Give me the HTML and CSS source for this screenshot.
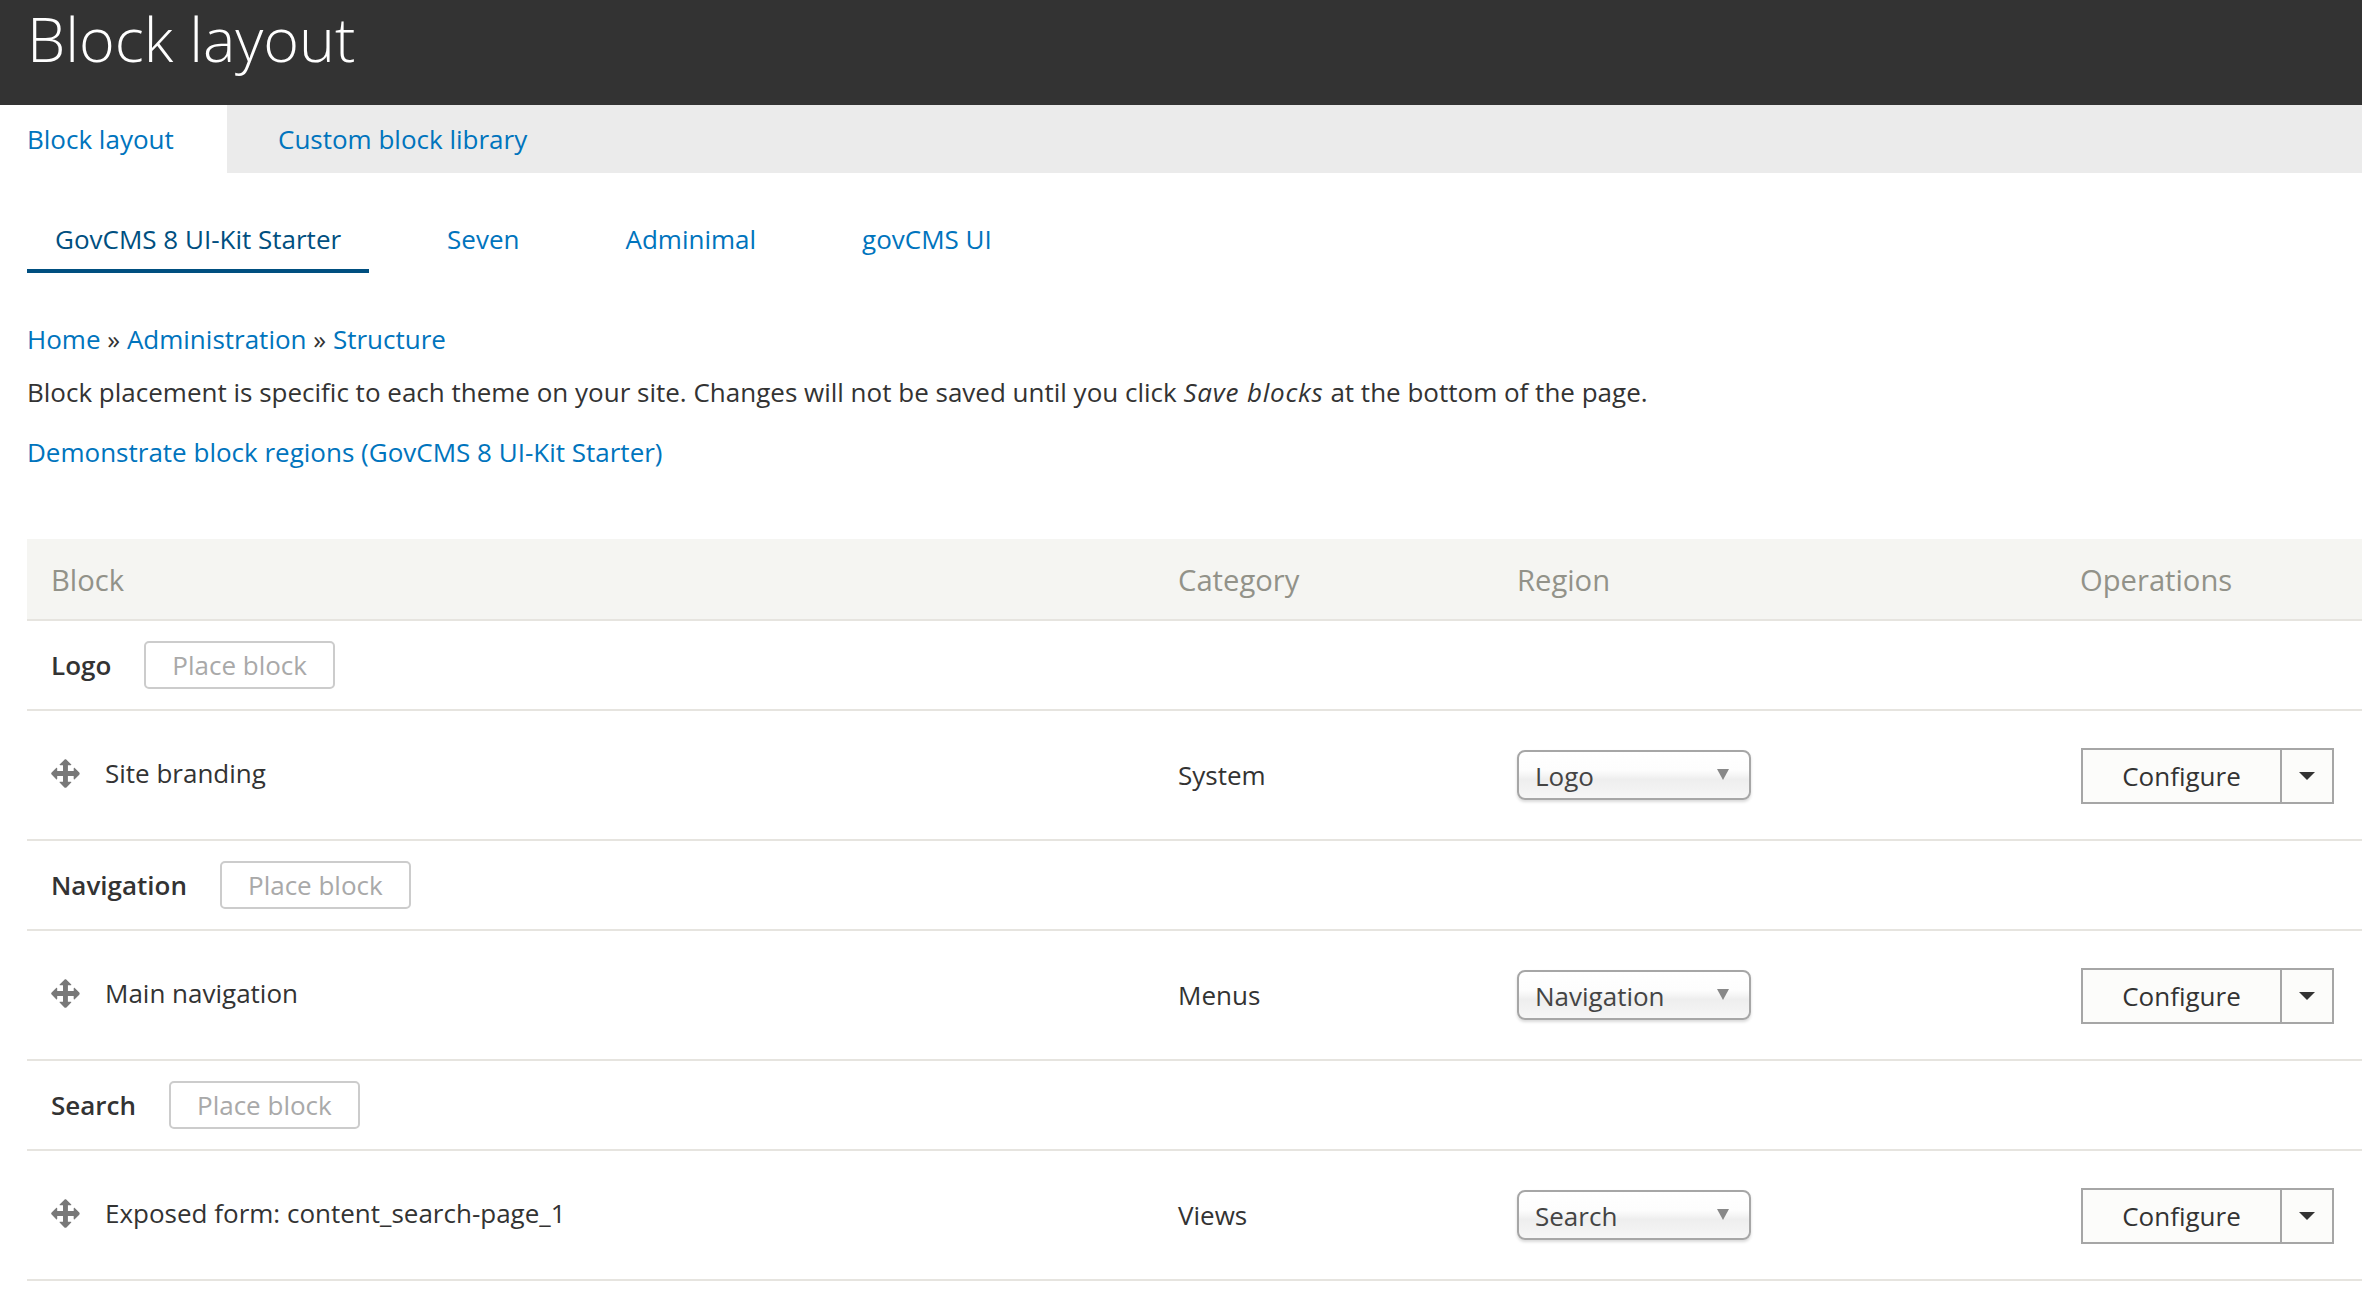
FILE: index.html
```html
<!DOCTYPE html>
<html lang="en">
<head>
<meta charset="utf-8">
<title>Block layout</title>
<link rel="stylesheet" href="styles.css">
</head>
<body>
<header class="page-head"><h1 class="page-title">Block layout</h1></header>
<nav class="tabs">
  <a class="tab tab-active" href="#">Block layout</a>
  <a class="tab" href="#">Custom block library</a>
</nav>
<nav class="subtabs">
  <a class="subtab subtab-active" href="#">GovCMS 8 UI-Kit Starter</a>
  <a class="subtab" href="#">Seven</a>
  <a class="subtab" href="#">Adminimal</a>
  <a class="subtab" href="#">govCMS UI</a>
</nav>
<main class="content">
  <div class="breadcrumb"><a href="#">Home</a> » <a href="#">Administration</a> » <a href="#">Structure</a></div>
  <p class="intro">Block placement is specific to each theme on your site. Changes will not be saved until you click <em>Save blocks</em> at the bottom of the page.</p>
  <p class="demo"><a href="#">Demonstrate block regions (GovCMS 8 UI-Kit Starter)</a></p>
  <table class="blocks">
    <thead>
      <tr><th class="col-block">Block</th><th class="col-cat">Category</th><th class="col-region">Region</th><th class="col-ops">Operations</th></tr>
    </thead>
    <tbody>
      <tr class="region-row"><td colspan="4"><div class="region-title"><strong>Logo</strong><a class="place" href="#">Place block</a></div></td></tr>
      <tr class="block-row">
        <td><div class="block-name"><svg class="drag" viewBox="0 0 16 16"><path d="M14.904 7.753l-2.373-2.372c-.291-.292-.529-.193-.529.22v1.399h-3v-3h1.399c.413 0 .512-.239.221-.53l-2.373-2.372c-.292-.292-.769-.292-1.061 0l-2.373 2.372c-.292.292-.193.53.22.53h1.397v3h-3v-1.369c0-.413-.239-.511-.53-.22l-2.372 2.372c-.292.292-.292.769 0 1.061l2.372 2.374c.292.291.53.192.53-.221v-1.398h3v3h-1.414c-.413 0-.511.238-.22.53l2.374 2.372c.291.292.768.292 1.06 0l2.374-2.372c.291-.292.192-.53-.221-.53h-1.399v-3h3v1.4c0 .412.238.511.529.219l2.373-2.372c.291-.291.291-.769 0-1.06z"/></svg><span>Site branding</span></div></td>
        <td>System</td>
        <td><div class="select"><span>Logo</span><i class="select-arrow"></i></div></td>
        <td><div class="ops"><a class="ops-main" href="#">Configure</a><a class="ops-toggle" href="#"><i class="caret"></i></a></div></td>
      </tr>
      <tr class="region-row"><td colspan="4"><div class="region-title"><strong>Navigation</strong><a class="place" href="#">Place block</a></div></td></tr>
      <tr class="block-row">
        <td><div class="block-name"><svg class="drag" viewBox="0 0 16 16"><path d="M14.904 7.753l-2.373-2.372c-.291-.292-.529-.193-.529.22v1.399h-3v-3h1.399c.413 0 .512-.239.221-.53l-2.373-2.372c-.292-.292-.769-.292-1.061 0l-2.373 2.372c-.292.292-.193.53.22.53h1.397v3h-3v-1.369c0-.413-.239-.511-.53-.22l-2.372 2.372c-.292.292-.292.769 0 1.061l2.372 2.374c.292.291.53.192.53-.221v-1.398h3v3h-1.414c-.413 0-.511.238-.22.53l2.374 2.372c.291.292.768.292 1.06 0l2.374-2.372c.291-.292.192-.53-.221-.53h-1.399v-3h3v1.4c0 .412.238.511.529.219l2.373-2.372c.291-.291.291-.769 0-1.06z"/></svg><span>Main navigation</span></div></td>
        <td>Menus</td>
        <td><div class="select"><span>Navigation</span><i class="select-arrow"></i></div></td>
        <td><div class="ops"><a class="ops-main" href="#">Configure</a><a class="ops-toggle" href="#"><i class="caret"></i></a></div></td>
      </tr>
      <tr class="region-row"><td colspan="4"><div class="region-title"><strong>Search</strong><a class="place" href="#">Place block</a></div></td></tr>
      <tr class="block-row">
        <td><div class="block-name"><svg class="drag" viewBox="0 0 16 16"><path d="M14.904 7.753l-2.373-2.372c-.291-.292-.529-.193-.529.22v1.399h-3v-3h1.399c.413 0 .512-.239.221-.53l-2.373-2.372c-.292-.292-.769-.292-1.061 0l-2.373 2.372c-.292.292-.193.53.22.53h1.397v3h-3v-1.369c0-.413-.239-.511-.53-.22l-2.372 2.372c-.292.292-.292.769 0 1.061l2.372 2.374c.292.291.53.192.53-.221v-1.398h3v3h-1.414c-.413 0-.511.238-.22.53l2.374 2.372c.291.292.768.292 1.06 0l2.374-2.372c.291-.292.192-.53-.221-.53h-1.399v-3h3v1.4c0 .412.238.511.529.219l2.373-2.372c.291-.291.291-.769 0-1.06z"/></svg><span>Exposed form: content_search-page_1</span></div></td>
        <td>Views</td>
        <td><div class="select"><span>Search</span><i class="select-arrow"></i></div></td>
        <td><div class="ops"><a class="ops-main" href="#">Configure</a><a class="ops-toggle" href="#"><i class="caret"></i></a></div></td>
      </tr>
    </tbody>
  </table>
</main>
</body>
</html>
```

FILE: styles.css
```css
* { box-sizing: border-box; }
html, body { margin: 0; padding: 0; height: 1290px; overflow: hidden; }
body { font-family: "Open Sans", "Noto Sans", sans-serif; font-size: 26px; line-height: 40px; color: #333; background: #fff; }
a { color: #0074bd; text-decoration: none; }

.page-head { height: 105px; background: #333; padding: 0 27px; }
.page-title { margin: 0; font-size: 61px; font-weight: 300; line-height: 77px; color: #fff; }

.tabs { display: flex; height: 68px; background: #ebebeb; }
.tab { display: block; line-height: 68px; padding: 0 51px; }
.tab-active { width: 227px; padding: 0 0 0 27px; background: #fff; }

.subtabs { display: flex; gap: 50px; padding: 45px 27px 0; }
.subtab { display: block; height: 55px; line-height: 42px; padding: 0 28px; }
.subtab-active { color: #004f80; border-bottom: 4px solid #004f80; }

.content { padding: 0 0 0 27px; }
.breadcrumb { margin-top: 46px; height: 40px; }
.intro { margin: 13px 0 0; }
.intro em { letter-spacing: 0.8px; }
.demo { margin: 20px 0 0; }

.blocks { width: 2335px; margin-top: 67px; border-collapse: collapse; table-layout: fixed; }
.blocks th { height: 81px; padding: 2px 24px 0; background: #f5f5f2; border-bottom: 2px solid #e6e4df; color: #929289; font-weight: 400; font-size: 29.2px; text-align: left; }
.col-block { width: 1127px; }
.col-cat { width: 339px; }
.col-region { width: 563px; }
.blocks td { padding: 0 24px; border-bottom: 2px solid #e6e4df; }
.region-row td { height: 90px; }
.block-row td { height: 130px; }
.region-title { display: flex; align-items: center; gap: 33px; }
.region-title strong { font-weight: 600; }
.place { display: block; height: 48px; line-height: 44px; padding: 0 26px; border: 2px solid #ccc; border-radius: 5px; color: #a9a9a9; }

.block-name { display: flex; align-items: center; gap: 25px; margin-top: -4px; }
.drag { width: 28px; height: 28px; margin-left: 1px; fill: #787878; flex: none; transform: scale(1.1); }

.select { position: relative; width: 234px; height: 50px; padding: 0 16px; line-height: 49px; border: 2px solid #a6a6a6; border-radius: 8px; background: linear-gradient(#fff 0%, #fdfdfd 40%, #eee 60%, #f6f6f6 100%); box-shadow: 0 2px 3px rgba(0,0,0,.15); color: #444; }
.select-arrow { position: absolute; right: 20px; top: 17px; border-left: 6px solid transparent; border-right: 6px solid transparent; border-top: 11px solid #888; }

.ops { display: flex; width: 253px; height: 56px; margin: 2px 0 0 1px; border: 2px solid #a6a6a6; background: #fcfcfa; color: #333; }
.ops-main { flex: 1; text-align: center; line-height: 53px; color: #333; border-right: 2px solid #a6a6a6; }
.ops-toggle { width: 50px; display: flex; align-items: center; justify-content: center; }
.caret { border-left: 8px solid transparent; border-right: 8px solid transparent; border-top: 8px solid #333; }
```
